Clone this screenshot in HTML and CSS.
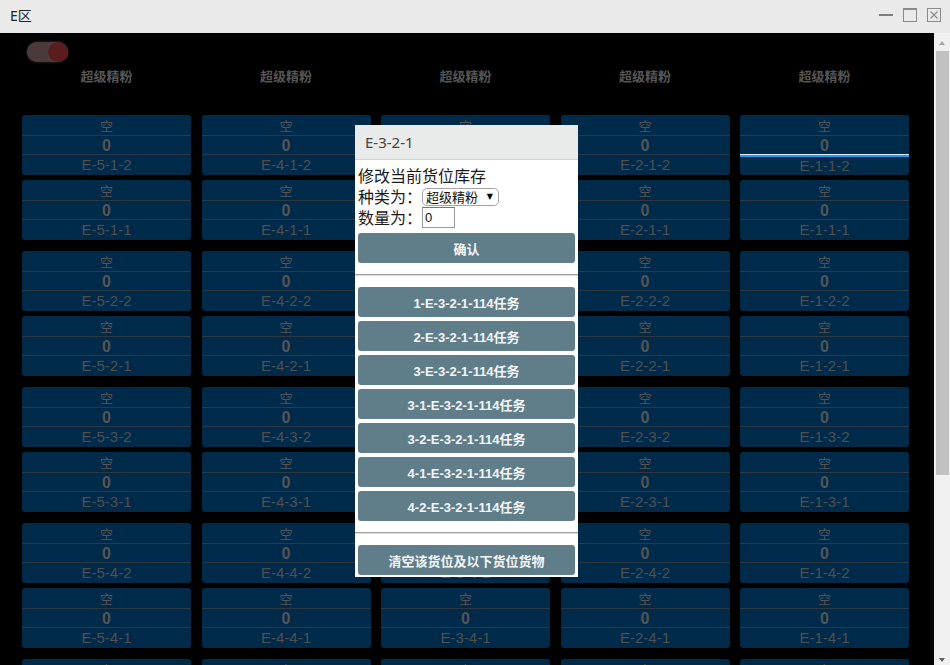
FILE: index.html
```html
<!DOCTYPE html>
<html lang="zh-CN">
<head>
<meta charset="utf-8">
<title>E区</title>
<link rel="stylesheet" href="styles.css">
</head>
<body>
<div class="window">
  <div class="titlebar">
    <span class="title">E区</span>
    <div class="ctrls">
      <svg width="14" height="14" viewBox="0 0 14 14"><rect x="0" y="6" width="14" height="2" fill="#7d7d7d"/></svg>
      <svg width="14" height="14" viewBox="0 0 14 14"><rect x="0.5" y="0.5" width="13" height="13" fill="none" stroke="#8a8a8a"/><rect x="0" y="0" width="14" height="2" fill="#8a8a8a"/></svg>
      <svg width="14" height="14" viewBox="0 0 14 14"><rect x="0.5" y="0.5" width="13" height="13" fill="none" stroke="#8a8a8a"/><path d="M3.5 3.5 L10.5 10.5 M10.5 3.5 L3.5 10.5" stroke="#8a8a8a" stroke-width="1.2"/></svg>
    </div>
  </div>
  <div class="client">
    <div class="main">
      <div class="toggle"><span class="knob"></span></div>
      <div class="heads">
        <div>超级精粉</div><div>超级精粉</div><div>超级精粉</div><div>超级精粉</div><div>超级精粉</div>
      </div>
      <div class="groups">
        <div class="group">
          <div class="card"><div class="c1">空</div><div class="c2">0</div><div class="c3">E-5-1-2</div></div>
          <div class="card"><div class="c1">空</div><div class="c2">0</div><div class="c3">E-4-1-2</div></div>
          <div class="card"><div class="c1">空</div><div class="c2">0</div><div class="c3">E-3-1-2</div></div>
          <div class="card"><div class="c1">空</div><div class="c2">0</div><div class="c3">E-2-1-2</div></div>
          <div class="card sel"><div class="c1">空</div><div class="c2">0</div><div class="c3">E-1-1-2</div></div>
          <div class="card"><div class="c1">空</div><div class="c2">0</div><div class="c3">E-5-1-1</div></div>
          <div class="card"><div class="c1">空</div><div class="c2">0</div><div class="c3">E-4-1-1</div></div>
          <div class="card"><div class="c1">空</div><div class="c2">0</div><div class="c3">E-3-1-1</div></div>
          <div class="card"><div class="c1">空</div><div class="c2">0</div><div class="c3">E-2-1-1</div></div>
          <div class="card"><div class="c1">空</div><div class="c2">0</div><div class="c3">E-1-1-1</div></div>
        </div>
        <div class="group">
          <div class="card"><div class="c1">空</div><div class="c2">0</div><div class="c3">E-5-2-2</div></div>
          <div class="card"><div class="c1">空</div><div class="c2">0</div><div class="c3">E-4-2-2</div></div>
          <div class="card"><div class="c1">空</div><div class="c2">0</div><div class="c3">E-3-2-2</div></div>
          <div class="card"><div class="c1">空</div><div class="c2">0</div><div class="c3">E-2-2-2</div></div>
          <div class="card"><div class="c1">空</div><div class="c2">0</div><div class="c3">E-1-2-2</div></div>
          <div class="card"><div class="c1">空</div><div class="c2">0</div><div class="c3">E-5-2-1</div></div>
          <div class="card"><div class="c1">空</div><div class="c2">0</div><div class="c3">E-4-2-1</div></div>
          <div class="card"><div class="c1">空</div><div class="c2">0</div><div class="c3">E-3-2-1</div></div>
          <div class="card"><div class="c1">空</div><div class="c2">0</div><div class="c3">E-2-2-1</div></div>
          <div class="card"><div class="c1">空</div><div class="c2">0</div><div class="c3">E-1-2-1</div></div>
        </div>
        <div class="group">
          <div class="card"><div class="c1">空</div><div class="c2">0</div><div class="c3">E-5-3-2</div></div>
          <div class="card"><div class="c1">空</div><div class="c2">0</div><div class="c3">E-4-3-2</div></div>
          <div class="card"><div class="c1">空</div><div class="c2">0</div><div class="c3">E-3-3-2</div></div>
          <div class="card"><div class="c1">空</div><div class="c2">0</div><div class="c3">E-2-3-2</div></div>
          <div class="card"><div class="c1">空</div><div class="c2">0</div><div class="c3">E-1-3-2</div></div>
          <div class="card"><div class="c1">空</div><div class="c2">0</div><div class="c3">E-5-3-1</div></div>
          <div class="card"><div class="c1">空</div><div class="c2">0</div><div class="c3">E-4-3-1</div></div>
          <div class="card"><div class="c1">空</div><div class="c2">0</div><div class="c3">E-3-3-1</div></div>
          <div class="card"><div class="c1">空</div><div class="c2">0</div><div class="c3">E-2-3-1</div></div>
          <div class="card"><div class="c1">空</div><div class="c2">0</div><div class="c3">E-1-3-1</div></div>
        </div>
        <div class="group">
          <div class="card"><div class="c1">空</div><div class="c2">0</div><div class="c3">E-5-4-2</div></div>
          <div class="card"><div class="c1">空</div><div class="c2">0</div><div class="c3">E-4-4-2</div></div>
          <div class="card"><div class="c1">空</div><div class="c2">0</div><div class="c3">E-3-4-2</div></div>
          <div class="card"><div class="c1">空</div><div class="c2">0</div><div class="c3">E-2-4-2</div></div>
          <div class="card"><div class="c1">空</div><div class="c2">0</div><div class="c3">E-1-4-2</div></div>
          <div class="card"><div class="c1">空</div><div class="c2">0</div><div class="c3">E-5-4-1</div></div>
          <div class="card"><div class="c1">空</div><div class="c2">0</div><div class="c3">E-4-4-1</div></div>
          <div class="card"><div class="c1">空</div><div class="c2">0</div><div class="c3">E-3-4-1</div></div>
          <div class="card"><div class="c1">空</div><div class="c2">0</div><div class="c3">E-2-4-1</div></div>
          <div class="card"><div class="c1">空</div><div class="c2">0</div><div class="c3">E-1-4-1</div></div>
        </div>
        <div class="group">
          <div class="card"><div class="c1">空</div><div class="c2">0</div><div class="c3">E-5-5-2</div></div>
          <div class="card"><div class="c1">空</div><div class="c2">0</div><div class="c3">E-4-5-2</div></div>
          <div class="card"><div class="c1">空</div><div class="c2">0</div><div class="c3">E-3-5-2</div></div>
          <div class="card"><div class="c1">空</div><div class="c2">0</div><div class="c3">E-2-5-2</div></div>
          <div class="card"><div class="c1">空</div><div class="c2">0</div><div class="c3">E-1-5-2</div></div>
        </div>
      </div>
    </div>
    <div class="scrollbar">
      <span class="arrow-up"></span>
      <span class="thumb"></span>
      <span class="arrow-down"></span>
    </div>
  </div>

  <div class="modal">
    <div class="mhead">E-3-2-1</div>
    <div class="mbody">
      <div class="line">修改当前货位库存</div>
      <div class="line">种类为：<span class="select">超级精粉<span class="caret">▼</span></span></div>
      <div class="line">数量为：<input class="num" type="text" value="0"></div>
      <div class="btn confirm">确认</div>
      <div class="sep"></div>
      <div class="tasks">
        <div class="btn">1-E-3-2-1-114任务</div>
        <div class="btn">2-E-3-2-1-114任务</div>
        <div class="btn">3-E-3-2-1-114任务</div>
        <div class="btn">3-1-E-3-2-1-114任务</div>
        <div class="btn">3-2-E-3-2-1-114任务</div>
        <div class="btn">4-1-E-3-2-1-114任务</div>
        <div class="btn">4-2-E-3-2-1-114任务</div>
      </div>
      <div class="sep"></div>
      <div class="btn">清空该货位及以下货位货物</div>
    </div>
  </div>
</div>
</body>
</html>
```

FILE: styles.css
```css
* { box-sizing: border-box; }
html, body { margin: 0; padding: 0; }
body {
  width: 950px;
  height: 665px;
  overflow: hidden;
  background: #000;
  font-family: "Liberation Sans", "Noto Sans CJK SC", sans-serif;
}
.window {
  position: relative;
  width: 950px;
  height: 665px;
  display: flex;
  flex-direction: column;
}
.titlebar {
  height: 33px;
  flex: none;
  background: #e9eae9;
  display: flex;
  justify-content: space-between;
}
.title {
  margin: 6px 0 0 10px;
  font-family: "Noto Sans", "Noto Sans CJK SC", sans-serif;
  font-size: 14px;
  line-height: 20px;
  color: #222;
}
.ctrls {
  display: flex;
  gap: 10px;
  margin: 8px 9px 0 0;
  height: 14px;
}
.ctrls svg { display: block; }
.client {
  flex: 1;
  display: flex;
  min-height: 0;
}
.main {
  flex: 1;
  background: #000;
  overflow: hidden;
  padding-top: 9px;
}
.toggle {
  width: 41px;
  height: 20px;
  margin-left: 27px;
  border-radius: 10px;
  background: #4a3a3a;
  box-shadow: 0 0 3px rgba(100, 80, 80, 0.7);
  display: flex;
  justify-content: flex-end;
}
.knob {
  width: 20px;
  height: 20px;
  border-radius: 50%;
  background: #5a1c1c;
}
.heads {
  display: grid;
  grid-template-columns: repeat(5, 1fr);
  column-gap: 10.5px;
  width: 887px;
  margin: 5px 0 0 22px;
  height: 18px;
  line-height: 18px;
  font-family: "Noto Sans CJK SC", sans-serif;
  font-weight: bold;
  font-size: 13px;
  color: #555;
  text-align: center;
}
.groups {
  margin: 30px 0 0 22px;
  width: 887px;
}
.group {
  display: grid;
  grid-template-columns: repeat(5, 1fr);
  column-gap: 10.5px;
  row-gap: 5px;
  margin-bottom: 11px;
}
.card {
  height: 60px;
  background: #002a4a;
  border-radius: 3px;
  overflow: hidden;
  text-align: center;
  color: #505050;
}
.c1 {
  height: 21px;
  border-bottom: 1px solid #2d3944;
  padding-top: 3px;
  font-size: 13px;
  line-height: 17px;
  color: #555;
}
.c2 {
  height: 19px;
  border-bottom: 1px solid #2d3944;
  font-size: 16px;
  font-weight: bold;
  line-height: 19px;
  color: #555;
}
.c3 {
  height: 20px;
  font-size: 15px;
  line-height: 19px;
}
.card.sel .c2 {
  height: 21px;
  border-bottom: 2px solid #1a9ef8;
  box-shadow: inset 0 -1px 0 #d6f0ff;
}
.card.sel .c3 {
  height: 18px;
  line-height: 17px;
}
.scrollbar {
  width: 16px;
  flex: none;
  background: #f0f0f0;
  display: flex;
  flex-direction: column;
  align-items: center;
}
.arrow-up {
  margin-top: 8px;
  width: 0;
  height: 0;
  border-left: 3.5px solid transparent;
  border-right: 3.5px solid transparent;
  border-bottom: 4px solid #a3a3a3;
}
.thumb {
  margin-top: 6px;
  width: 13px;
  height: 424px;
  background: #c1c1c1;
  align-self: flex-end;
  margin-right: 1px;
}
.arrow-down {
  margin-top: auto;
  margin-bottom: 3px;
  width: 0;
  height: 0;
  border-left: 3.5px solid transparent;
  border-right: 3.5px solid transparent;
  border-top: 4px solid #5e5e5e;
}
.modal {
  position: absolute;
  left: 355px;
  top: 125px;
  width: 223px;
  height: 452px;
  background: #fff;
}
.mhead {
  height: 35px;
  background: #e9eaea;
  border-bottom: 1px solid #d3d3d3;
  padding-left: 10px;
  line-height: 34px;
  font-family: "Noto Sans", sans-serif;
  font-size: 15px;
  color: #444;
}
.mbody {
  padding: 5px 3px 2px;
  font-family: "Noto Sans CJK SC", "Liberation Sans", sans-serif;
  font-size: 16px;
  color: #1a1a1a;
}
.line {
  height: 21px;
  line-height: 21px;
  display: flex;
  align-items: center;
  white-space: nowrap;
}
.select {
  display: inline-flex;
  align-items: center;
  justify-content: space-between;
  height: 18px;
  width: 77px;
  border: 1px solid #a5a5a5;
  border-radius: 5px;
  padding: 0 5px 0 3px;
  font-size: 13px;
  line-height: 16px;
  color: #111;
}
.caret {
  font-family: "DejaVu Sans", sans-serif;
  font-size: 8px;
  color: #000;
}
.num {
  width: 33px;
  height: 21px;
  margin: 0;
  border: 1px solid #9a9a9a;
  border-top-color: #777;
  padding: 0 2px;
  font-family: "Liberation Sans", sans-serif;
  font-size: 13px;
  color: #111;
  outline: none;
}
.btn {
  display: flex;
  align-items: center;
  justify-content: center;
  height: 30px;
  background: #607d8a;
  border-radius: 3px;
  color: #f4f6f7;
  font-family: "Liberation Sans", "Noto Sans CJK SC", sans-serif;
  font-weight: bold;
  font-size: 13px;
}
.confirm { margin-top: 5px; }
.sep {
  margin: 11px -3px;
  height: 2px;
  border-top: 1px solid #a0a0a0;
  border-bottom: 1px solid #dcdcdc;
}
.tasks {
  display: flex;
  flex-direction: column;
  gap: 4px;
}
```
